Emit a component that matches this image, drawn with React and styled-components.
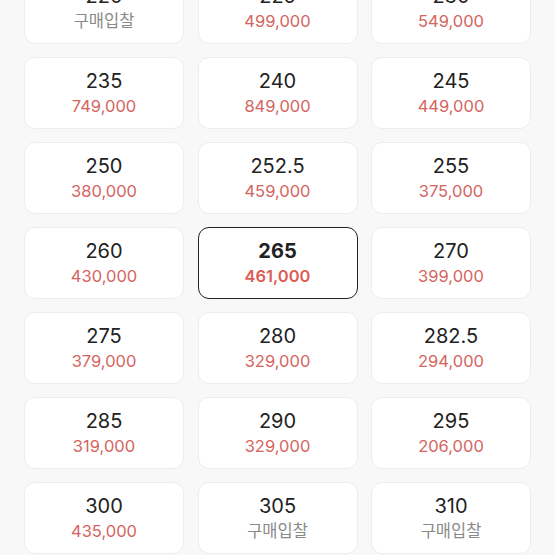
import React from 'react';
import styled, { createGlobalStyle } from 'styled-components';

const GlobalStyle = createGlobalStyle`
  body {
    margin: 0;
    background: #f8f8f8;
    font-family: Inter, "Noto Sans CJK KR", sans-serif;
  }
`;

const Page = styled.div`
  width: 555px;
  height: 555px;
  overflow: hidden;
`;

const Grid = styled.div`
  display: grid;
  grid-template-columns: repeat(3, 160px);
  grid-auto-rows: 72px;
  column-gap: 13.5px;
  row-gap: 13px;
  padding-left: 24px;
  margin-top: -28px;
`;

const Card = styled.div`
  box-sizing: border-box;
  display: flex;
  flex-direction: column;
  align-items: center;
  justify-content: center;
  gap: 4px;
  background: #fff;
  border-radius: 11px;
  border: ${p => (p.$active ? '1.5px solid #222' : '1px solid #ededed')};
`;

const Size = styled.div`
  font-size: 20px;
  line-height: 22px;
  color: #222;
  font-weight: ${p => (p.$active ? 700 : 400)};
`;

const Price = styled.div`
  font-size: 16.5px;
  line-height: 20px;
  color: ${p => (p.$bid ? '#8a8a8a' : p.$active ? '#dc5d55' : '#d4655f')};
  font-weight: ${p => (p.$active ? 600 : 400)};
`;

const items = [
  ['220', null], ['225', '499,000'], ['230', '549,000'],
  ['235', '749,000'], ['240', '849,000'], ['245', '449,000'],
  ['250', '380,000'], ['252.5', '459,000'], ['255', '375,000'],
  ['260', '430,000'], ['265', '461,000'], ['270', '399,000'],
  ['275', '379,000'], ['280', '329,000'], ['282.5', '294,000'],
  ['285', '319,000'], ['290', '329,000'], ['295', '206,000'],
  ['300', '435,000'], ['305', null], ['310', null],
];

const App = () => {
  const selected = '265';
  return (
    <>
      <GlobalStyle />
      <Page>
        <Grid>
          {items.map(([size, price]) => {
            const active = size === selected;
            return (
              <Card key={size} $active={active}>
                <Size $active={active}>{size}</Size>
                <Price $active={active} $bid={!price}>
                  {price || '구매입찰'}
                </Price>
              </Card>
            );
          })}
        </Grid>
      </Page>
    </>
  );
};

export default App;
